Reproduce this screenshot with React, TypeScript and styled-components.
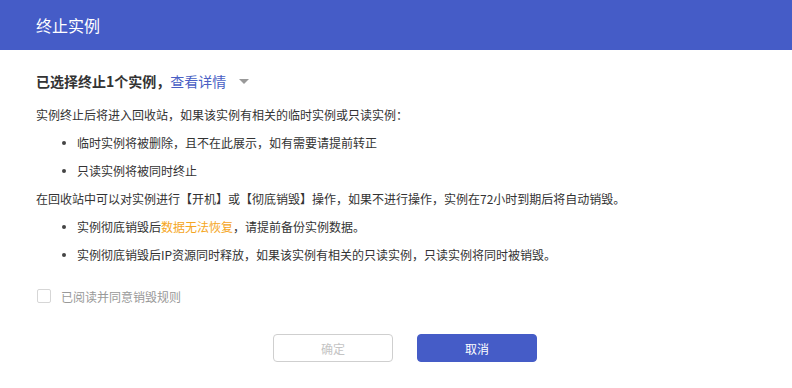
import React, { useState } from "react";
import styled, { createGlobalStyle } from "styled-components";

const GlobalStyle = createGlobalStyle`
  html, body {
    margin: 0;
    padding: 0;
    background: #fff;
    font-family: "Noto Sans CJK SC", "Noto Sans", "Liberation Sans", sans-serif;
  }
`;

const Dialog = styled.div`
  width: 792px;
  height: 388px;
  background: #fff;
  display: flex;
  flex-direction: column;
`;

const Header = styled.div`
  height: 50px;
  background-color: #455cc7;
  color: #fff;
  font-size: 16px;
  display: flex;
  align-items: center;
  padding-left: 36px;
  flex-shrink: 0;
`;

const Body = styled.div`
  padding: 17px 36px 0;
  color: #333;
`;

const SelectedLine = styled.div`
  font-size: 14px;
  font-weight: bold;
  line-height: 28px;
  display: flex;
  align-items: center;
  margin-bottom: 6px;
`;

const DetailLink = styled.span`
  color: #4a5fc4;
  font-weight: normal;
  cursor: pointer;
`;

const Caret = styled.span`
  display: inline-block;
  width: 0;
  height: 0;
  border-left: 5px solid transparent;
  border-right: 5px solid transparent;
  border-top: 5px solid #999;
  margin-left: 13px;
`;

const Paragraph = styled.div`
  font-size: 12px;
  line-height: 28px;
`;

const List = styled.ul`
  list-style: none;
  margin: 0;
  padding: 0 0 0 41px;
`;

const Item = styled.li`
  font-size: 12px;
  line-height: 28px;
  position: relative;
  &::before {
    content: "";
    position: absolute;
    left: -15px;
    top: 12px;
    width: 4px;
    height: 4px;
    border-radius: 50%;
    background: #444;
  }
`;

const Warn = styled.span`
  color: #f5a623;
`;

const AgreeRow = styled.label`
  display: flex;
  align-items: center;
  margin-top: 17px;
  padding-left: 1px;
  height: 20px;
  font-size: 12px;
  color: #999;
  cursor: pointer;
`;

const Box = styled.span<{ $checked: boolean }>`
  width: 12px;
  height: 12px;
  border: 1px solid #d6d6d6;
  border-radius: 2px;
  background: ${(p) => (p.$checked ? "#455cc7" : "#fff")};
  margin-right: 10px;
`;

const Footer = styled.div`
  display: flex;
  justify-content: center;
  gap: 24px;
  margin-top: 28px;
  padding-left: 18px;
`;

const Button = styled.button<{ $primary?: boolean }>`
  width: 120px;
  height: 28px;
  border-radius: 4px;
  font-family: inherit;
  font-size: 12px;
  border: 1px solid ${(p) => (p.$primary ? "#455cc7" : "#cfcfcf")};
  background: ${(p) => (p.$primary ? "#455cc7" : "#fff")};
  color: ${(p) => (p.$primary ? "#fff" : "#c4c4c4")};
  cursor: ${(p) => (p.$primary ? "pointer" : "not-allowed")};
  padding: 0;
`;

export default function App() {
  const [agreed, setAgreed] = useState(false);

  return (
    <Dialog>
      <GlobalStyle />
      <Header>终止实例</Header>
      <Body>
        <SelectedLine>
          已选择终止1个实例，<DetailLink>查看详情</DetailLink>
          <Caret />
        </SelectedLine>
        <Paragraph>实例终止后将进入回收站，如果该实例有相关的临时实例或只读实例：</Paragraph>
        <List>
          <Item>临时实例将被删除，且不在此展示，如有需要请提前转正</Item>
          <Item>只读实例将被同时终止</Item>
        </List>
        <Paragraph>
          在回收站中可以对实例进行【开机】或【彻底销毁】操作，如果不进行操作，实例在72小时到期后将自动销毁。
        </Paragraph>
        <List>
          <Item>
            实例彻底销毁后<Warn>数据无法恢复</Warn>，请提前备份实例数据。
          </Item>
          <Item>实例彻底销毁后IP资源同时释放，如果该实例有相关的只读实例，只读实例将同时被销毁。</Item>
        </List>
        <AgreeRow onClick={() => setAgreed(!agreed)}>
          <Box $checked={agreed} />
          已阅读并同意销毁规则
        </AgreeRow>
      </Body>
      <Footer>
        <Button disabled={!agreed}>确定</Button>
        <Button $primary>取消</Button>
      </Footer>
    </Dialog>
  );
}
